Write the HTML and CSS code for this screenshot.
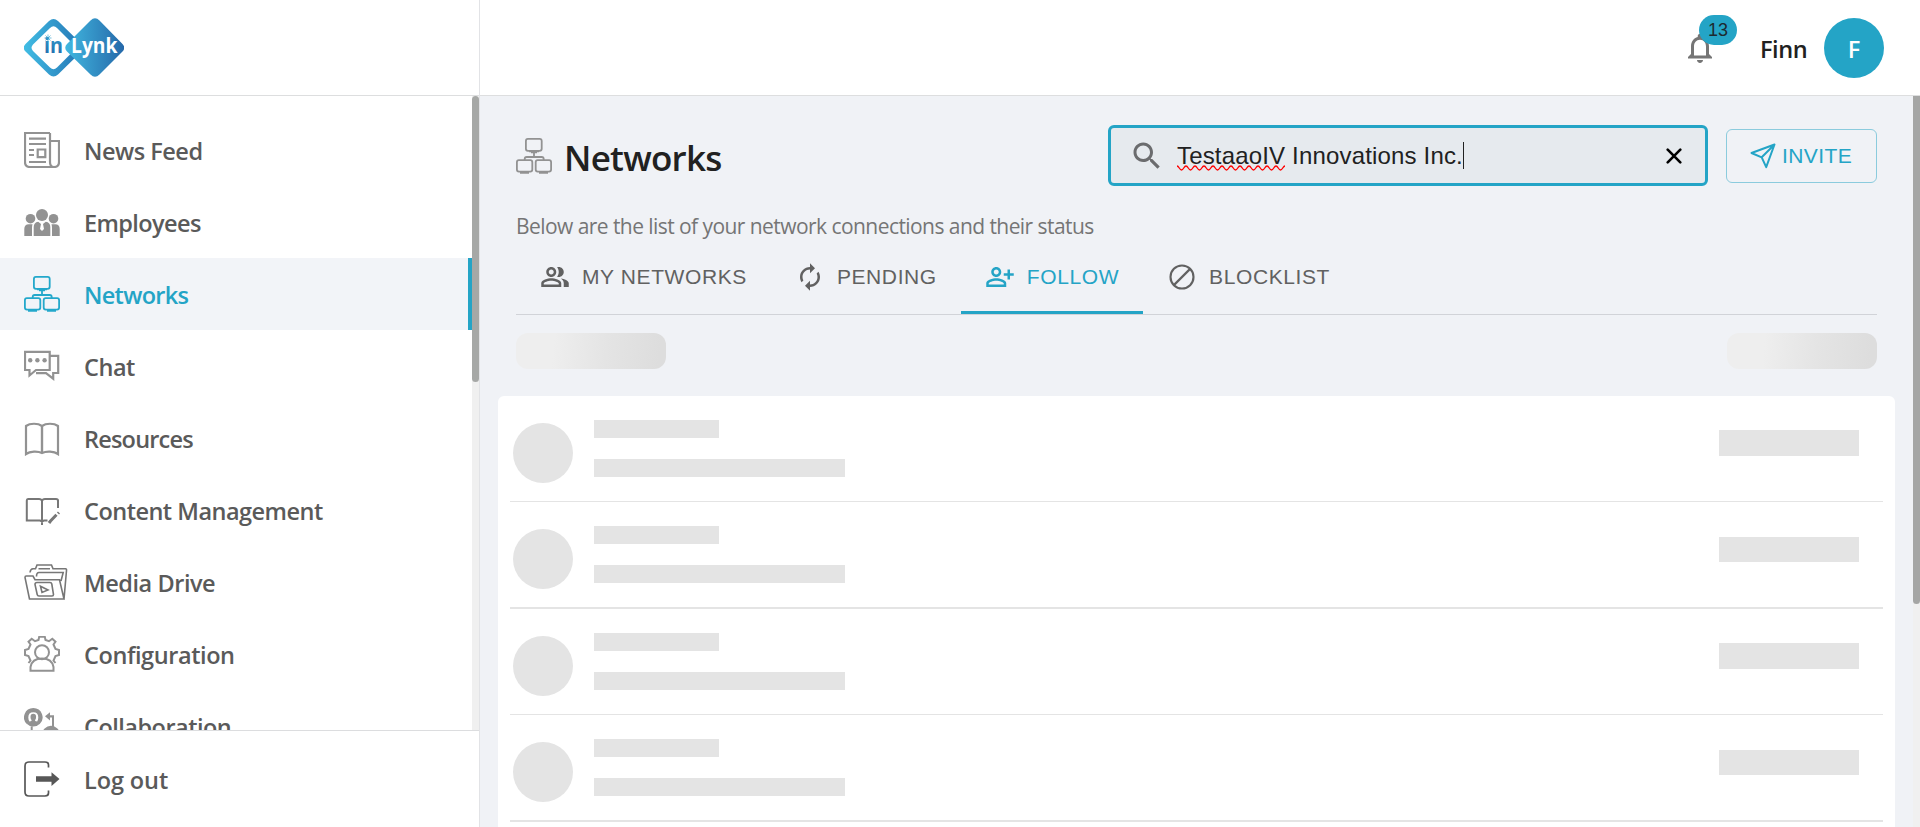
FILE: index.html
```html
<!DOCTYPE html>
<html lang="en">
<head>
<meta charset="utf-8">
<title>Networks</title>
<link rel="stylesheet" href="styles.css">
</head>
<body>
<svg class="defs" width="0" height="0">
  <symbol id="network" viewBox="0 0 36 36">
    <g fill="none" stroke="currentColor" stroke-width="1.8">
      <rect x="9.900" y=".9" width="15.800" height="11.900" rx="2"/>
      <path d="M13 13.300h10M15 14.300h6M18 14v5M8.700 22v-1q0-2 2-2h15q2 0 2 2v1M4 34.800h9M23 34.800h9"/>
      <rect x=".9" y="22.200" width="15.400" height="11.400" rx="2"/>
      <rect x="19.700" y="22.200" width="15.400" height="11.400" rx="2"/>
    </g>
  </symbol>
</svg>
<div class="app">
  <aside class="sidebar">
    <div class="brand">
      <svg class="logo" width="100" height="60" viewBox="0 0 100 60">
        <defs>
          <linearGradient id="ga" x1="0" x2="1"><stop offset="0" stop-color="#41bde4"/><stop offset="1" stop-color="#2473b3"/></linearGradient>
          <linearGradient id="gb" x1="0" x2="1"><stop offset="0" stop-color="#41b8e0"/><stop offset="1" stop-color="#2568a9"/></linearGradient>
          <linearGradient id="gc" x1="0" x2="0" y1="0" y2="1"><stop offset="0" stop-color="#36a5d3"/><stop offset="1" stop-color="#2163a6"/></linearGradient>
        </defs>
        <path fill-rule="evenodd" d="M25 3Q29.500-1 34 3L57.500 26Q61 29.800 57.500 33.500L34 56.500Q29.500 60.500 25 56.500L1.500 33.500Q-2 29.800 1.500 26ZM26 10 9 26.500Q6 29.800 9 33L26 49.500Q29.500 53 33 49.500L49.500 33Q52.500 29.800 49.500 26.500L33 10Q29.500 6.500 26 10Z" fill="url(#ga)"/>
        <path d="M66.500 2.500Q71-1.800 75.500 2.500L98.500 26Q102 29.700 98.500 33.500L75.500 56.500Q71 61 66.500 56.500L43 33.500Q39.500 29.700 43 26Z" fill="url(#gb)"/>
        <path d="M24 16.500v7M20.500 20h7M21.500 17.500l5 5M26.500 17.500l-5 5" stroke="#3aa5d0" stroke-width=".7"/>
        <text class="logo-in" x="20" y="35.300" fill="url(#gc)" textLength="19" lengthAdjust="spacingAndGlyphs">in</text>
        <text class="logo-lynk" x="47" y="35.300" textLength="46.500" lengthAdjust="spacingAndGlyphs">Lynk</text>
      </svg>
    </div>
    <div class="nav-wrap">
      <nav class="nav">
        <a class="item"><svg class="ico" viewBox="0 0 36 36"><path d="M26 1H1v29q0 5 5 5h24q5 0 5-5V9h-9M26 1v29q0 5 4 5M5 6.700h17M5 12h17M5 18h5M5 23h5M5 30h17M13.700 17.500h7.600v7.600h-7.600z"/></svg><span class="t1">News Feed</span></a>
        <a class="item"><svg class="ico solid" viewBox="0 0 36 36"><circle cx="18" cy="11" r="6"/><circle cx="6.500" cy="14.700" r="4.800"/><circle cx="29.500" cy="14.700" r="4.800"/><path d="M9.700 32V23q0-4.500 4.500-5.200L17 20l-1 5 2 2 2-2-1-5 2.800-2.200q4.500.7 4.500 5.200v9zM.3 32v-7q0-4.500 4.500-4.700h3.700Q8 22 8 24v8zM35.700 32v-7q0-4.500-4.500-4.700h-3.700Q28 22 28 24v8z"/></svg><span class="t2">Employees</span></a>
        <a class="item active"><svg class="ico net"><use href="#network"/></svg><span class="t3">Networks</span></a>
        <a class="item"><svg class="ico" viewBox="0 0 36 36"><path d="M1 3.800h24.700V22H12l-6.500 5.500V22H1zM26 7.800h8.200V25h-5v5.700L22 25.200H12"/><g fill="currentColor" stroke="none"><circle cx="6.200" cy="12.200" r="2.200"/><circle cx="13.400" cy="12.200" r="2.200"/><circle cx="20.600" cy="12.200" r="2.200"/></g></svg><span class="t4">Chat</span></a>
        <a class="item"><svg class="ico" viewBox="0 0 36 36"><path d="M18 6C14 3 6 3 2 6v28c4-3 12-3 16-1 4-2 12-2 16 1V6C30 3 22 3 18 6zv28"/><path d="M18 6v27"/></svg><span class="t5">Resources</span></a>
        <a class="item"><svg class="ico dark" viewBox="0 0 36 36"><path d="M18 9q-.5-2-3-2H4Q2.800 7 2.800 8.500v20H16l2 1 2-1h3.500M18 9v24M18 9q.5-2 3-2h11q2 0 2 1.500V16"/><path stroke-width="3" d="m25 31 1.500-2 6-6.200M34 21.500l1-1"/></svg><span class="t6">Content Management</span></a>
        <a class="item media"><svg class="ico dark thin" viewBox="0 0 44 36"><path d="M5.500 35 1 13.500Q1 12 2.200 12H9l2 3.700h24.500L40 35zM6 8.500Q6.500 5 9 4.800h2.500L13 1h14.500L29 4.800h12.500q1.200 0 1 1.700L40 35M12.500 12.500q0-4 2.500-4h24.200L37 17M14.500 4.800H26M13 18.500h13q1.500 0 1.800 1.500l1.700 10.500q0 1.500-1.500 1.500H15q-1.500 0-1.800-1.500L11 20.500q0-2 2-2zM16.500 22.300l1.500 6.200 6-2.500z"/></svg><span class="t7">Media Drive</span></a>
        <a class="item"><svg class="ico gear" viewBox="0 0 36 36"><path d="M4.500 27 6.500 24.500 4.500 20 1 19v-5l3.500-1L6.500 8.500 4.500 5.700 7.700 2.700 11 5.200 14.500 4l.7-3.200h5.600L21.500 4 25 5.200l3.300-2.500 3.200 3L29.500 8.500l2 4.500 3.500 1v5l-3.500 1-2 4.500 2 2.500"/><circle cx="18" cy="16.200" r="7"/><path d="M6.500 34.700V31q1.500-8.500 11.500-8.500T29.500 31v3.700z"/></svg><span class="t8">Configuration</span></a>
        <a class="item"><svg class="ico solid" viewBox="0 0 36 36"><path fill-rule="evenodd" d="M9.300 0a9.300 9.300 0 0 1 6.200 16.200L13 13.500q1.300-1.500 1.300-4 0-5.200-5-5.200t-5 5.200q0 2.500 1.300 4L3.100 16.200A9.300 9.300 0 0 1 9.300 0z"/><path d="M9.300 5.700q2.800 0 2.800 3.200 0 2-1 3v1.200q4.400.8 4.400 2.900-2.500 2.600-6.200 2.600T3.100 16q0-2.100 4.400-2.900v-1.200q-1-1-1-3 0-3.200 2.800-3.200zM6.700 17h2v12h-2zM21 8.300l5-4v3h4V22h-2V9.500h-2v3zM27 17.800a9 9 0 1 1 0 18 9 9 0 0 1 0-18z"/></svg><span class="t9">Collaboration</span></a>
      </nav>
      <div class="track"><div class="thumb"></div></div>
    </div>
    <a class="logout"><svg class="ico out" viewBox="0 0 36 36"><path d="M24.500 6.500V4q0-3-3.500-3H5Q1 1 1 5v26q0 4 4 4h16q3.500 0 3.500-3v-2.500"/><path fill="currentColor" stroke="none" d="M12 15.300h15.500v-4L35.500 18l-8 7v-4.300H12z"/></svg><span class="t10">Log out</span></a>
  </aside>
  <div class="page">
    <header class="topbar">
      <div class="bell">
        <svg width="36" height="36" viewBox="0 0 24 24"><path d="M12 22c1.100 0 2-.9 2-2h-4c0 1.100.9 2 2 2zm6-6v-5c0-3.070-1.630-5.640-4.500-6.320V4c0-.83-.67-1.500-1.500-1.500s-1.500.67-1.500 1.500v.68C7.640 5.360 6 7.920 6 11v5l-2 2v1h16v-1l-2-2zm-2 1H8v-6c0-2.480 1.510-4.500 4-4.500s4 2.020 4 4.500v6z"/></svg>
        <span class="badge">13</span>
      </div>
      <span class="user">Finn</span>
      <span class="avatar">F</span>
    </header>
    <div class="scroll">
      <main class="main">
        <div class="head">
          <svg class="head-ico"><use href="#network"/></svg>
          <h1>Networks</h1>
          <div class="search">
            <svg width="36" height="36" viewBox="0 0 24 24" fill="#6b6c6e"><path d="M15.500 14h-.79l-.28-.27C15.410 12.590 16 11.110 16 9.500 16 5.910 13.090 3 9.500 3S3 5.910 3 9.500 5.910 16 9.500 16c1.610 0 3.090-.59 4.230-1.570l.27.28v.79l5 4.990L20.490 19l-4.990-5zm-6 0C7.010 14 5 11.990 5 9.500S7.010 5 9.500 5 14 7.010 14 9.500 11.990 14 9.500 14z"/></svg>
            <span class="query"><span class="misspelt">TestaaoIV<svg class="squiggle" width="108" height="6"><defs><pattern id="wave" width="9" height="6" patternUnits="userSpaceOnUse"><path d="M-1 .5 0 1Q1 1 2.250 3T4.500 5 6.750 3 9 1l1-.5" fill="none" stroke="#f00" stroke-width="1.300"/></pattern></defs><rect width="108" height="6" fill="url(#wave)"/></svg></span> Innovations Inc.</span><span class="caret"></span>
            <svg class="clear" width="16" height="16" viewBox="0 0 16 16"><path d="M1.700 1.700l12.600 12.600M14.300 1.700 1.700 14.300" stroke="#000" stroke-width="2.600" stroke-linecap="round"/></svg>
          </div>
          <div class="invite">
            <svg width="26" height="26" viewBox="0 0 26 26" fill="none" stroke="currentColor" stroke-width="2" stroke-linejoin="round"><path d="M1.500 10 24.500 1.500 16.200 24.200 11.700 14.300zM11.700 14.300 24.500 1.500"/></svg>
            <span>INVITE</span>
          </div>
        </div>
        <p class="desc">Below are the list of your network connections and their status</p>
        <div class="tabs">
          <div class="tab"><svg viewBox="0 0 24 24"><path d="M16.670 13.130C18.040 14.060 19 15.320 19 17v3h4v-3c0-2.180-3.570-3.470-6.330-3.870zM15 12c2.210 0 4-1.790 4-4s-1.790-4-4-4c-.47 0-.91.1-1.330.24C14.500 5.270 15 6.580 15 8s-.5 2.730-1.330 3.760c.42.14.86.24 1.330.24zM9 12c2.210 0 4-1.790 4-4s-1.790-4-4-4-4 1.790-4 4 1.790 4 4 4zm0-6c1.100 0 2 .9 2 2s-.9 2-2 2-2-.9-2-2 .9-2 2-2zm0 7c-2.670 0-8 1.340-8 4v3h16v-3c0-2.660-5.330-4-8-4zm6 5H3v-.99C3.200 16.290 6.300 15 9 15s5.800 1.290 6 2v1z"/></svg><span>MY NETWORKS</span></div>
          <div class="tab"><svg viewBox="0 0 24 24"><path d="M12 6v3l4-4-4-4v3c-4.420 0-8 3.580-8 8 0 1.570.46 3.030 1.240 4.260L6.700 14.800c-.45-.83-.7-1.790-.7-2.800 0-3.310 2.690-6 6-6zm6.760 1.740L17.300 9.200c.44.84.7 1.790.7 2.800 0 3.310-2.690 6-6 6v-3l-4 4 4 4v-3c4.420 0 8-3.580 8-8 0-1.570-.46-3.030-1.240-4.260z"/></svg><span>PENDING</span></div>
          <div class="tab on"><svg viewBox="0 0 24 24"><path d="M9 12c2.210 0 4-1.790 4-4s-1.790-4-4-4-4 1.790-4 4 1.790 4 4 4zm0-6c1.100 0 2 .9 2 2s-.9 2-2 2-2-.9-2-2 .9-2 2-2zm0 7c-2.670 0-8 1.340-8 4v3h16v-3c0-2.660-5.330-4-8-4zm6 5H3v-.99C3.200 16.290 6.300 15 9 15s5.800 1.290 6 2v1zM20 14v-3h3V9h-3V6h-2v3h-3v2h3v3z"/></svg><span>FOLLOW</span></div>
          <div class="tab"><svg viewBox="0 0 24 24"><path d="M5.700 18.300 18.300 5.700M21.200 12a9.200 9.200 0 1 1-18.400 0 9.200 9.200 0 0 1 18.400 0z" fill="none" stroke="currentColor" stroke-width="1.700"/></svg><span>BLOCKLIST</span></div>
        </div>
        <div class="filters"><div class="shimmer"></div><div class="shimmer"></div></div>
        <div class="list">
          <div class="row"><div class="disc"></div><div class="lines"><div class="bar short"></div><div class="bar"></div></div><div class="action"></div></div>
          <div class="row alt"><div class="disc"></div><div class="lines"><div class="bar short"></div><div class="bar"></div></div><div class="action"></div></div>
          <div class="row"><div class="disc"></div><div class="lines"><div class="bar short"></div><div class="bar"></div></div><div class="action"></div></div>
          <div class="row alt"><div class="disc"></div><div class="lines"><div class="bar short"></div><div class="bar"></div></div><div class="action"></div></div>
        </div>
      </main>
      <div class="track"><div class="thumb page-thumb"></div></div>
    </div>
  </div>
</div>
</body>
</html>
```
FILE: styles.css
```css
* { box-sizing: border-box; }
body { margin: 0; font-family: "Open Sans", "Noto Sans", sans-serif; color: #212121; background: #fff; }
.defs { display: block; }
svg { flex: none; display: block; }
.app { display: grid; grid-template-columns: 480px 1fr; height: 827px; overflow: hidden; }

.sidebar { display: flex; flex-direction: column; height: 827px; border-right: 1px solid #e2e3e6; background: #fff; }
.brand { flex: none; height: 96px; padding: 18px 0 0 24px; border-bottom: 1px solid #dddedf; }
.logo-in { font: 700 20.5px "Open Sans", sans-serif; }
.logo-lynk { font: 700 20.5px "Open Sans", sans-serif; fill: #fff; }
.nav-wrap { display: flex; height: 634px; overflow: hidden; }
.nav { flex: 1; padding-top: 18px; }
.track { flex: none; width: 7px; background: #f0f0f0; }
.thumb { height: 286px; border-radius: 4px; background: #a6a8a6; }
.page-thumb { height: 508px; background: #a5a6a5; border-radius: 0 0 4px 4px; }
.item, .logout { display: flex; align-items: center; gap: 24px; height: 72px; padding-left: 24px; font-size: 23.5px; font-weight: 600; line-height: 32px; color: #5a5a5a; white-space: nowrap; }
.item span, .logout span { padding-top: 2px; }
.t1 { letter-spacing: -.48px; }
.t2 { letter-spacing: -.6px; }
.t3 { letter-spacing: -.69px; }
.t4 { letter-spacing: -.46px; }
.t5 { letter-spacing: -.8px; }
.t6 { letter-spacing: -.51px; }
.t7 { letter-spacing: -.45px; }
.t8 { letter-spacing: -.42px; }
.t9 { letter-spacing: -.51px; }
.t10 { letter-spacing: -.1px; }
.item.active { background: #f2f4f8; border-right: 4px solid #24a4c6; color: #24a4c6; }
.ico { width: 36px; height: 36px; color: #929292; fill: none; stroke: currentColor; stroke-width: 2.2; }
.ico.solid { fill: currentColor; stroke: none; }
.ico.net { color: #24a8cb; }
.ico.dark { color: #777; stroke-width: 2; }
.ico.thin { stroke-width: 1.6; }
.ico.gear { stroke-width: 2; }
.ico.out { color: #575757; stroke-width: 1.7; }
.media { gap: 16px; }
.media .ico { width: 44px; }
.logout { flex: 1; border-top: 1px solid #dcdddf; }

.page { min-width: 0; display: flex; flex-direction: column; height: 827px; }
.topbar { flex: none; display: flex; align-items: center; justify-content: flex-end; height: 96px; padding-right: 36px; border-bottom: 1px solid #dddedf; }
.bell { position: relative; margin-right: 42px; fill: #757575; }
.badge { position: absolute; left: 17px; top: -15px; width: 38px; height: 30px; border-radius: 15px; background: #24a4c6; font: 18px/30px "Liberation Sans", sans-serif; text-align: center; color: #1d2a30; }
.user { width: 46px; margin-right: 18px; padding-top: 2px; font-size: 23.5px; font-weight: 600; letter-spacing: -.4px; }
.avatar { width: 60px; height: 60px; border-radius: 50%; background: #24a4c6; color: #fff; font-size: 23.5px; font-weight: 600; line-height: 62px; text-align: center; }

.scroll { display: flex; height: 731px; overflow: hidden; background: #f0f2f6; }
.main { flex: 1; min-width: 0; padding: 29px 18px 0; }
.head { display: flex; align-items: center; height: 61px; padding: 0 18px; }
.head-ico { width: 36px; height: 36px; color: #929292; }
h1 { margin: 0 auto 0 12px; padding-top: 4px; font-size: 35px; font-weight: 600; line-height: 48px; letter-spacing: -.75px; color: #212121; }
.search { display: flex; align-items: center; width: 600px; height: 61px; padding: 0 23px 0 18px; border: 3px solid #24a4c6; border-radius: 6px; background: #e6eaee; font: 24px/30px "Liberation Sans", Arial, sans-serif; color: #212121; }
.query { margin-left: 12px; letter-spacing: .17px; white-space: pre; }
.misspelt { position: relative; }
.squiggle { position: absolute; left: 0; top: 23px; }
.caret { width: 1px; height: 27px; background: #212121; }
.clear { margin-left: auto; }
.invite { display: flex; align-items: center; gap: 6px; width: 151px; height: 54px; margin-left: 18px; padding-left: 23px; border: 1px solid #8bcbdd; border-radius: 6px; color: #24a4c6; font: 21px/30px "Liberation Sans", Arial, sans-serif; letter-spacing: .4px; }
.desc { margin: 24px 18px 0; font-size: 21px; line-height: 32px; letter-spacing: -.56px; color: #757575; white-space: nowrap; }
.tabs { display: flex; height: 73px; margin: 0 18px; border-bottom: 1px solid #d1d3d8; }
.tab { display: flex; align-items: center; gap: 12px; height: 72px; padding: 0 24px; border-bottom: 3px solid transparent; font: 21px/30px "Liberation Sans", Arial, sans-serif; letter-spacing: .6px; color: #616161; white-space: nowrap; }
.tab svg { width: 30px; height: 30px; fill: currentColor; }
.tab.on { color: #24a4c6; border-color: #24a4c6; }
.filters { display: flex; justify-content: space-between; height: 81px; padding: 18px 18px 0; }
.shimmer { width: 150px; height: 36px; border-radius: 12px; background: linear-gradient(95deg, #eee 25%, #e4e4e4 60%, #ddd 95%); }
.list { padding: 0 12px 20px; border-radius: 6px; background: #fff; }
.row { display: flex; align-items: flex-start; height: 106px; padding: 0 24px 0 3px; border-bottom: 1px solid #e4e4e4; }
.row.alt { height: 107px; border-bottom-width: 2px; }
.disc { width: 60px; height: 60px; margin-top: 27px; border-radius: 50%; background: #e4e4e4; }
.lines { display: grid; gap: 21px; margin: 24px auto 0 21px; }
.bar { width: 251px; height: 18px; background: #e4e4e4; }
.bar.short { width: 125px; }
.action { width: 140px; height: 26px; margin-top: 34px; background: #e4e4e4; }
.alt .action { height: 25px; margin-top: 35px; }
```
